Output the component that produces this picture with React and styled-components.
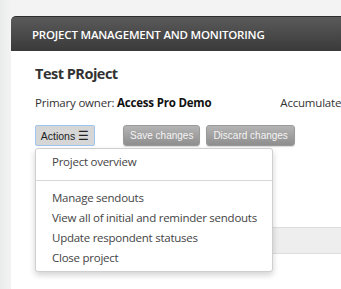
import styled, { createGlobalStyle } from "styled-components"

const GlobalStyle = createGlobalStyle`
  html, body {
    margin: 0;
    padding: 0;
    background: #f3f3f3;
    font-family: "Open Sans", "Noto Sans", sans-serif;
  }
  body {
    width: 341px;
    height: 289px;
    overflow: hidden;
  }
`

const menuItems = [
  ["Project overview"],
  ["Manage sendouts", "View all of initial and reminder sendouts", "Update respondent statuses", "Close project"],
]

export default function App() {
  return (
    <>
      <GlobalStyle />
      <Page>
        <Panel>
          <Header>PROJECT MANAGEMENT AND MONITORING</Header>
          <Body>
            <Title>Test PRoject</Title>
            <InfoRow>
              <span>
                Primary owner: <strong>Access Pro Demo</strong>
              </span>
              <span>Accumulated</span>
            </InfoRow>
            <Toolbar>
              <ActionsWrap>
                <ActionsButton>
                  Actions <Burger>☰</Burger>
                </ActionsButton>
                <Menu>
                  {menuItems.map((group, i) => (
                    <MenuGroup key={i} $first={i === 0}>
                      {group.map((label) => (
                        <MenuItem key={label}>{label}</MenuItem>
                      ))}
                    </MenuGroup>
                  ))}
                </Menu>
              </ActionsWrap>
              <GreyButton>Save changes</GreyButton>
              <GreyButton>Discard changes</GreyButton>
            </Toolbar>
            <Spacer />
            <GreyBar />
          </Body>
        </Panel>
      </Page>
    </>
  )
}

const Page = styled.div`
  height: 289px;
  padding: 16px 0 0 11px;
  box-sizing: border-box;
  background: linear-gradient(90deg, #e9ecec 0px, #f3f3f3 11px);
`

const Panel = styled.div`
  background: #fff;
  height: 273px;
  border-top-left-radius: 5px;
`

const Header = styled.div`
  height: 34px;
  display: flex;
  align-items: center;
  padding-left: 21px;
  background: linear-gradient(180deg, #5a5a5a 0%, #3a3a3a 100%);
  border-top: 1px solid #2e2e2e;
  border-top-left-radius: 5px;
  color: #fff;
  font-size: 11.5px;
  font-weight: 600;
  letter-spacing: -0.2px;
`

const Body = styled.div`
  padding: 13px 0 0 24px;
  display: flex;
  flex-direction: column;
`

const Title = styled.h1`
  margin: 0;
  font-size: 14.5px;
  font-weight: 700;
  color: #333;
  letter-spacing: -0.5px;
  line-height: 20px;
`

const InfoRow = styled.div`
  margin-top: 11px;
  display: flex;
  gap: 69px;
  font-size: 11.5px;
  color: #333;
  white-space: nowrap;
  letter-spacing: -0.2px;

  strong {
    color: #111;
    font-weight: 700;
  }
`

const Toolbar = styled.div`
  margin-top: 15px;
  display: flex;
  align-items: center;
  gap: 6px;
  font-family: "Liberation Sans", Arial, sans-serif;
`

const ActionsWrap = styled.div`
  position: relative;
  margin-right: 22px;
`

const ActionsButton = styled.button`
  height: 21px;
  width: 60px;
  padding: 0;
  border: 1px solid #9ec5ef;
  border-radius: 2px;
  background: #d6d6d6;
  color: #222;
  font-family: inherit;
  font-size: 10.5px;
  display: flex;
  align-items: center;
  justify-content: center;
  gap: 3px;
`

const Burger = styled.span`
  font-size: 12px;
  line-height: 1;
`

const GreyButton = styled.button`
  height: 21px;
  padding: 0 6px;
  border: 1px solid #9a9a9a;
  border-radius: 3px;
  background: linear-gradient(180deg, #b4b4b4 0%, #8e8e8e 100%);
  color: #f4f4f4;
  font-family: inherit;
  font-size: 10px;
  box-shadow: 0 1px 1px rgba(0, 0, 0, 0.15);
`

const Menu = styled.div`
  position: absolute;
  top: 23px;
  left: 0;
  width: 236px;
  background: #fff;
  border: 1px solid #cfcfcf;
  border-radius: 3px;
  box-shadow: 0 3px 6px rgba(0, 0, 0, 0.18);
  z-index: 2;
  font-family: "Open Sans", "Noto Sans", sans-serif;
`

const MenuGroup = styled.div`
  padding: ${(p) => (p.$first ? "3px 0 8px" : "7px 0 3px")};
  border-bottom: ${(p) => (p.$first ? "1px solid #d8d8d8" : "none")};
`

const MenuItem = styled.div`
  height: 20px;
  line-height: 20px;
  padding-left: 16px;
  font-size: 11.5px;
  color: #444;
  white-space: nowrap;
  letter-spacing: -0.25px;
`

const Spacer = styled.div`
  height: 81px;
`

const GreyBar = styled.div`
  height: 25px;
  background: #eee;
  border-top: 1px solid #ddd;
  border-bottom: 1px solid #ddd;
  border-left: 1px solid #ccc;
`
